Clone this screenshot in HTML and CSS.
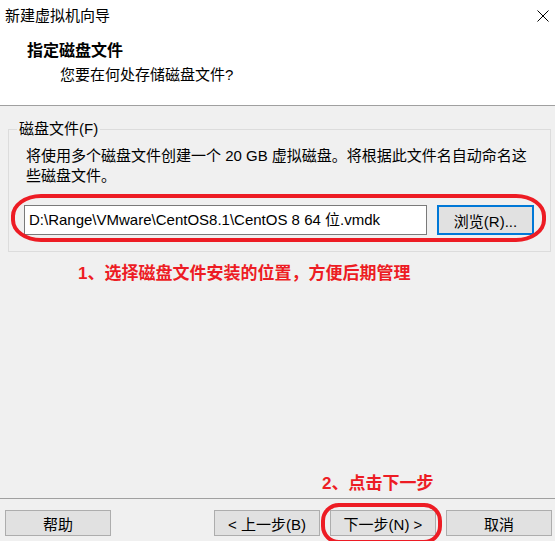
FILE: index.html
```html
<!DOCTYPE html>
<html lang="zh-CN">
<head>
    <meta charset="UTF-8" />
    <title>新建虚拟机向导</title>
    <link rel="stylesheet" href="styles.css">
</head>
<body>
    <div class="titlebar">
        <div class="title">新建虚拟机向导</div>
        <svg class="close" width="12" height="12" viewBox="0 0 12 12">
            <path d="M0.5 0.5 L11.5 11.5 M11.5 0.5 L0.5 11.5" stroke="#000" stroke-width="1" fill="none"/>
        </svg>
    </div>

    <header class="header">
        <div class="header-title">指定磁盘文件</div>
        <div class="header-sub">您要在何处存储磁盘文件?</div>
    </header>

    <div class="main">
        <fieldset class="group">
            <legend>磁盘文件(F)</legend>
            <div class="desc">将使用多个磁盘文件创建一个 20 GB 虚拟磁盘。将根据此文件名自动命名这些磁盘文件。</div>
            <div class="file-row">
                <div class="file-input">D:\Range\VMware\CentOS8.1\CentOS 8 64 位.vmdk</div>
                <div class="btn btn-focus">浏览(R)...</div>
                <div class="mark mark-row"></div>
            </div>
        </fieldset>

        <div class="note note-1">1、选择磁盘文件安装的位置，方便后期管理</div>
        <div class="spacer"></div>
        <div class="note note-2">2、点击下一步</div>
    </div>

    <footer class="footer">
        <div class="btn">帮助</div>
        <div class="footer-right">
            <div class="btn">&lt; 上一步(B)</div>
            <div class="btn btn-next">下一步(N) &gt;
                <div class="mark mark-next"></div>
            </div>
            <div class="btn">取消</div>
        </div>
    </footer>
</body>
</html>
```

FILE: styles.css
```css
body {
    margin: 0;
    width: 555px;
    height: 541px;
    background-color: #f0f0f0;
    font-family: "Liberation Sans", "Noto Sans CJK SC", sans-serif;
    font-size: 15px;
    color: #000;
    display: flex;
    flex-direction: column;
    box-sizing: border-box;
    overflow: hidden;
}

.titlebar {
    height: 32px;
    background-color: #fff;
    display: flex;
    justify-content: space-between;
    align-items: center;
    padding: 0 6px 0 5px;
    flex-shrink: 0;
}

.title {
    line-height: 20px;
}

.header {
    background-color: #fff;
    height: 74px;
    box-sizing: border-box;
    padding: 9px 0 0 27px;
    border-bottom: 1px solid #a0a0a0;
    flex-shrink: 0;
}

.header-title {
    font-weight: bold;
    font-size: 16px;
    line-height: 20px;
}

.header-sub {
    line-height: 20px;
    margin-top: 4px;
    padding-left: 33px;
}

.main {
    flex: 1;
    display: flex;
    flex-direction: column;
}

.group {
    margin: 14px 4px 0 8px;
    padding: 8px 16px 16px 15px;
    border: 1px solid #dcdcdc;
    min-width: 0;
}

.group legend {
    padding: 0 2px;
    margin-left: -7px;
    line-height: 18px;
}

.desc {
    line-height: 20px;
    padding-left: 2px;
    max-width: 502px;
}

.file-row {
    position: relative;
    display: flex;
    align-items: center;
    gap: 10px;
    margin-top: 19px;
}

.file-input {
    width: 403px;
    height: 30px;
    box-sizing: border-box;
    border: 1px solid #7a7a7a;
    background-color: #fff;
    padding: 0 4px;
    line-height: 28px;
    white-space: nowrap;
}

.btn {
    position: relative;
    width: 106px;
    height: 26px;
    box-sizing: border-box;
    background-color: #e1e1e1;
    border: 1px solid #adadad;
    display: flex;
    justify-content: center;
    align-items: center;
    white-space: nowrap;
}

.btn-focus {
    width: 97px;
    height: 30px;
    border: 2px solid #0078d7;
}

.mark {
    position: absolute;
    border: 4px solid #ed1c24;
    pointer-events: none;
}

.mark-row {
    left: -13px;
    right: -12px;
    top: -11px;
    bottom: -7px;
    border-radius: 30px / 22px;
}

.note {
    color: #ed1c24;
    font-weight: bold;
    font-size: 17px;
    line-height: 22px;
}

.note-1 {
    margin-top: 11px;
    padding-left: 78px;
}

.spacer {
    flex: 1;
}

.note-2 {
    padding-left: 322px;
    margin-bottom: 3px;
}

.footer {
    border-top: 1px solid #a0a0a0;
    padding: 11px 3px 5px 5px;
    display: flex;
    justify-content: space-between;
    flex-shrink: 0;
}

.footer-right {
    display: flex;
    gap: 10px;
}

.mark-next {
    left: -10px;
    right: -7px;
    top: -8px;
    bottom: -9px;
    border-radius: 18px;
}
```
